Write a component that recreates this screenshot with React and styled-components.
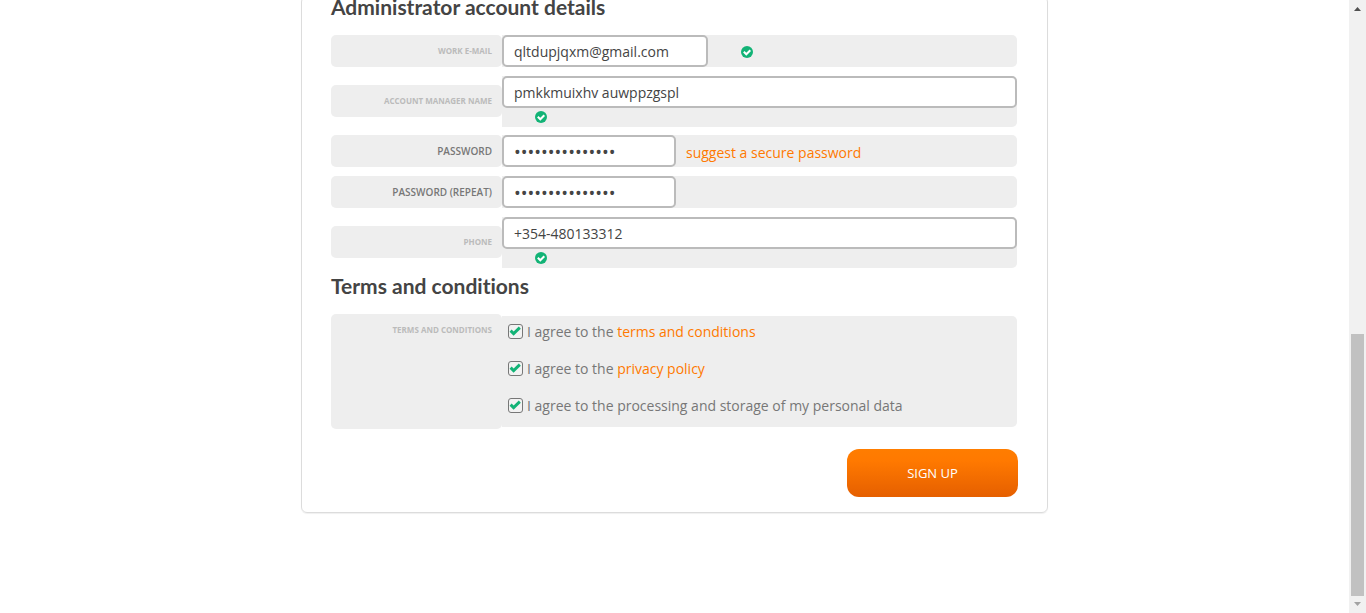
import React from 'react';
import styled, { createGlobalStyle, css } from 'styled-components';

const GlobalStyle = createGlobalStyle`
  * { box-sizing: border-box; }
  html, body { margin: 0; height: 100%; overflow: hidden; background: #fff; }
  #root { height: 100%; }
  body, input, button { font-family: "Open Sans", sans-serif; font-size: 14px; }
`;

const Page = styled.div`
  display: flex;
  height: 100vh;
`;

const Content = styled.main`
  flex: 1;
  min-width: 0;
  padding: 0 16px;
  overflow: hidden;
`;

const Card = styled.form`
  max-width: 747px;
  margin: -4px auto 0;
  padding: 0 30px 15px 29px;
  border: 1px solid #dcdcdc;
  border-radius: 6px;
  box-shadow: 0 1px 1px #f0f0f0;
`;

const Heading = styled.h2`
  margin: 0 0 18px;
  font-family: Lato, sans-serif;
  font-size: 21px;
  font-weight: 700;
  font-variant-ligatures: none;
  line-height: 20px;
  color: #444;
`;

const Row = styled.div`
  display: flex;
  align-items: flex-start;
  margin-bottom: ${(p) => (p.$tall ? 8 : 9)}px;
`;

const labelCell = css`
  flex: 0 0 171px;
  padding-right: 10px;
  border-radius: 5px;
  background: #eee;
  text-align: right;
  text-transform: uppercase;
  font-size: ${(p) => (p.$strong ? 10 : 8)}px;
  font-weight: ${(p) => (p.$strong ? 600 : 700)};
  line-height: 32px;
  color: ${(p) => (p.$strong ? '#777' : '#bbb')};
`;

const Label = styled.label`
  ${labelCell}
  height: 32px;
  margin-top: ${(p) => (p.$tall ? 9 : 0)}px;
`;

const GroupLabel = styled.div`
  ${labelCell}
  align-self: stretch;
`;

const Field = styled.div`
  flex: 1;
  min-width: 0;
  display: flex;
  flex-direction: ${(p) => (p.$tall ? 'column' : 'row')};
  align-items: ${(p) => (p.$tall ? 'flex-start' : 'center')};
  height: ${(p) => (p.$tall ? 51 : 32)}px;
  background: #eee;
  border-radius: 0 5px 5px 0;
`;

const widths = { medium: '40%', small: '174px', full: '100%' };

const TextInput = styled.input`
  width: ${(p) => widths[p.$size]};
  height: 32px;
  padding: 0 10px;
  border: 2px solid #bbb;
  border-radius: 5px;
  outline: none;
  background: #fff;
  color: #444;
  &[type='password'] {
    padding-top: 2px;
    font-size: 18px;
  }
`;

const Valid = styled.svg`
  width: 12px;
  height: 12px;
  margin: ${(p) => (p.$below ? '3px 0 0 33px' : '2px 0 0 33px')};
`;

const Link = styled.a`
  color: #ff7900;
  text-decoration: none;
`;

const SuggestLink = styled(Link)`
  margin-left: 10px;
  padding-top: 2px;
`;

const TermsGroup = styled.div`
  display: flex;
  margin-bottom: 20px;
`;

const Terms = styled.div`
  flex: 1;
  display: flex;
  flex-direction: column;
  gap: 17px;
  margin: 2px 0;
  padding: 5px 6px 12px;
  background: #eee;
  border-radius: 0 5px 5px 0;
`;

const Agreement = styled.div`
  display: flex;
  align-items: center;
  gap: 4px;
  height: 20px;
  color: #777;
`;

const TickWrap = styled.span`
  display: grid;
  width: 15px;
  height: 15px;
  > * { grid-area: 1 / 1; }
`;

const TickInput = styled.input`
  appearance: none;
  width: 15px;
  height: 15px;
  margin: 0;
  border: 1px solid #777;
  border-radius: 3px;
  background: #f2f2f2;
`;

const TickMark = styled.svg`
  width: 15px;
  height: 15px;
  pointer-events: none;
`;

const AgreementText = styled.label`
  padding-top: 2px;
  line-height: 20px;
`;

const Actions = styled.div`
  display: flex;
  justify-content: flex-end;
  margin-right: -1px;
`;

const SubmitButton = styled.button`
  width: 171px;
  height: 48px;
  border: 0;
  border-radius: 12px;
  background: linear-gradient(#ff7d00 0%, #ff7900 25%, #e55f00 100%);
  color: #fff;
  font-size: 13px;
`;

const ScrollTrack = styled.div`
  flex: 0 0 17px;
  display: flex;
  flex-direction: column;
  align-items: center;
  background: #f1f1f1;
`;

const ScrollArrow = styled.svg`
  width: 17px;
  height: 17px;
  fill: ${(p) => (p.$dim ? '#a3a3a3' : '#505050')};
`;

const ScrollRoom = styled.div`
  flex: 317;
`;

const ScrollThumb = styled.div`
  flex: 262;
  width: 13px;
  background: #c1c1c1;
`;

function ValidIcon({ below }) {
  return (
    <Valid $below={below} viewBox="0 0 12 12" role="img" aria-label="Valid">
      <circle cx="6" cy="6" r="6" fill="#12b376" />
      <path d="M2.8 5.8l2.5 2.5L9.3 4.3" fill="none" stroke="#fff" strokeWidth="2" />
    </Valid>
  );
}

function FormRow({ id, label, type = 'text', value, size, tall, strong, children }) {
  return (
    <Row $tall={tall}>
      <Label htmlFor={id} $tall={tall} $strong={strong}>{label}</Label>
      <Field $tall={tall}>
        <TextInput id={id} type={type} defaultValue={value} $size={size} />
        {children}
      </Field>
    </Row>
  );
}

function Agree({ id, children }) {
  return (
    <Agreement>
      <TickWrap>
        <TickInput id={id} type="checkbox" defaultChecked />
        <TickMark viewBox="0 0 15 15">
          <path d="M2.6 6.6l3 3L11.8 3.6" fill="none" stroke="#12b376" strokeWidth="2.9" />
        </TickMark>
      </TickWrap>
      <AgreementText htmlFor={id}>{children}</AgreementText>
    </Agreement>
  );
}

export default function App() {
  return (
    <Page>
      <GlobalStyle />
      <Content>
        <Card onSubmit={(e) => e.preventDefault()}>
          <Heading>Administrator account details</Heading>
          <FormRow id="email" label="Work e-mail" value="qltdupjqxm@gmail.com" size="medium">
            <ValidIcon />
          </FormRow>
          <FormRow id="manager" label="Account manager name" value="pmkkmuixhv auwppzgspl" size="full" tall>
            <ValidIcon below />
          </FormRow>
          <FormRow id="password" label="Password" type="password" value="securepassword1" size="small" strong>
            <SuggestLink href="#suggest">suggest a secure password</SuggestLink>
          </FormRow>
          <FormRow id="repeat" label="Password (repeat)" type="password" value="securepassword1" size="small" strong />
          <FormRow id="phone" label="Phone" value="+354-480133312" size="full" tall>
            <ValidIcon below />
          </FormRow>
          <Heading>Terms and conditions</Heading>
          <TermsGroup role="group" aria-labelledby="terms-label">
            <GroupLabel id="terms-label">Terms and conditions</GroupLabel>
            <Terms>
              <Agree id="terms">I agree to the <Link href="#terms">terms and conditions</Link></Agree>
              <Agree id="privacy">I agree to the <Link href="#privacy">privacy policy</Link></Agree>
              <Agree id="data">I agree to the processing and storage of my personal data</Agree>
            </Terms>
          </TermsGroup>
          <Actions>
            <SubmitButton type="submit">SIGN UP</SubmitButton>
          </Actions>
        </Card>
      </Content>
      <ScrollTrack aria-hidden="true">
        <ScrollArrow viewBox="0 0 17 17"><path d="M5 11h7L8.5 7z" /></ScrollArrow>
        <ScrollRoom />
        <ScrollThumb />
        <ScrollArrow $dim viewBox="0 0 17 17"><path d="M5 6h7L8.5 10z" /></ScrollArrow>
      </ScrollTrack>
    </Page>
  );
}
